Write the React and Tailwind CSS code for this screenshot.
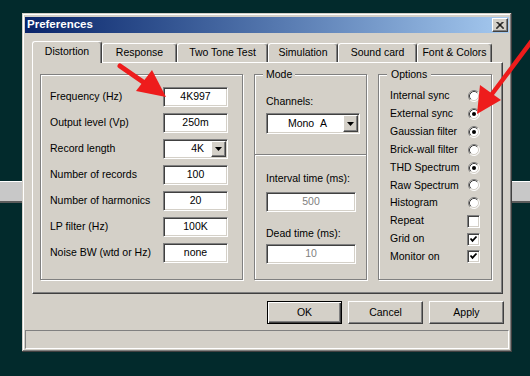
import React from 'react'

const raised =
  'border border-t-white border-l-white border-r-[#404040] border-b-[#404040] shadow-[inset_-1px_-1px_#808080]'
const sunken =
  'border border-t-[#808080] border-l-[#808080] border-r-white border-b-white shadow-[inset_1px_1px_#404040,inset_-1px_-1px_#d4d0c8]'

function Field({ value, disabled, className = '' }) {
  return (
    <div
      className={`${sunken} bg-white h-[20px] flex items-center justify-center ${
        disabled ? 'text-[#808080]' : 'text-black'
      } ${className}`}
    >
      {value}
    </div>
  )
}

function Combo({ value, className = '', textClass = '' }) {
  return (
    <div className={`${sunken} bg-white flex items-stretch p-[1px] ${className}`}>
      <div className={`flex-1 flex items-center ${textClass}`}>{value}</div>
      <div className={`w-[15px] ${raised} bg-[#d4d0c8] flex items-center justify-center`}>
        <svg width="7" height="4" viewBox="0 0 7 4">
          <polygon points="0,0 7,0 3.5,4" fill="black" />
        </svg>
      </div>
    </div>
  )
}

function Radio({ on }) {
  return (
    <svg width="12" height="12" viewBox="0 0 12 12">
      <circle cx="6" cy="6" r="5" fill="white" />
      <path d="M2.11 9.89 A5.5 5.5 0 0 1 9.89 2.11" stroke="#808080" fill="none" />
      <path d="M9.89 2.11 A5.5 5.5 0 0 1 2.11 9.89" stroke="white" fill="none" />
      <path d="M2.82 9.18 A4.5 4.5 0 0 1 9.18 2.82" stroke="#404040" fill="none" />
      <path d="M9.18 2.82 A4.5 4.5 0 0 1 2.82 9.18" stroke="#d4d0c8" fill="none" />
      {on && <circle cx="6" cy="6" r="2" fill="black" />}
    </svg>
  )
}

function Check({ on }) {
  return (
    <div className={`${sunken} bg-white w-[13px] h-[13px] flex items-center justify-center`}>
      {on && (
        <svg width="9" height="9" viewBox="0 0 9 9">
          <polyline points="1.5,3.5 3.5,5.8 7.5,1.5" stroke="black" strokeWidth="1.8" fill="none" />
        </svg>
      )}
    </div>
  )
}

function BgBar() {
  return <div className="h-[22px] bg-[#c8c8c8] border-t border-t-white border-b-2 border-b-[#5c5c5c]" />
}

const tabs = [
  ['Response', 'w-[75px]'],
  ['Two Tone Test', 'w-[91px]'],
  ['Simulation', 'w-[70px]'],
  ['Sound card', 'w-[79px]'],
  ['Font & Colors', 'w-[75px]'],
]

const leftRows = [
  ['Frequency (Hz)', '4K997'],
  ['Output level (Vp)', '250m'],
  ['Record length', null],
  ['Number of records', '100'],
  ['Number of harmonics', '20'],
  ['LP filter (Hz)', '100K'],
  ['Noise BW (wtd or Hz)', 'none'],
]

const options = [
  ['Internal sync', 'radio', false],
  ['External sync', 'radio', true],
  ['Gaussian filter', 'radio', true],
  ['Brick-wall filter', 'radio', false],
  ['THD Spectrum', 'radio', true],
  ['Raw Spectrum', 'radio', false],
  ['Histogram', 'radio', false],
  ['Repeat', 'check', false],
  ['Grid on', 'check', true],
  ['Monitor on', 'check', true],
]

function Window() {
  return (
    <div className="h-[339px] bg-[#d4d0c8] flex flex-col pt-[4px] px-[3px] pb-[3px] shadow-[inset_-1px_-1px_#404040,inset_1px_1px_#d4d0c8,inset_-2px_-2px_#808080,inset_2px_2px_white]">
      {/* Title bar */}
      <div className="h-[16px] flex items-center justify-between pl-[2px] pr-[1px] bg-linear-to-r from-[#0a246a] to-[#a6caf0]">
        <span className="text-white font-bold text-[11.5px] leading-none">Preferences</span>
        <div className={`w-[16px] h-[14px] ${raised} bg-[#d4d0c8] flex items-center justify-center`}>
          <svg width="8" height="7" viewBox="0 0 8 7">
            <path d="M0.5 0 L7.5 7 M1.5 0 L8 6.5 M7.5 0 L0.5 7 M6.5 0 L0 6.5" stroke="black" strokeWidth="1" />
          </svg>
        </div>
      </div>

      {/* Tabs */}
      <div className="ml-[7px] mr-[6px] mt-[8px]">
        <div className="relative z-10 flex items-end h-[21px]">
          <div className="w-[70px] h-[22px] -mb-[1px] bg-[#d4d0c8] border-l border-t border-r border-l-white border-t-white border-r-[#404040] shadow-[inset_-1px_0_#808080] rounded-t-[3px] flex items-center justify-center pb-[2px]">
            Distortion
          </div>
          {tabs.map(([label, w]) => (
            <div
              key={label}
              className={`${w} h-[19px] border-l border-t border-r border-l-white border-t-white border-r-[#404040] shadow-[inset_-1px_0_#808080] rounded-t-[3px] flex items-center justify-center`}
            >
              {label}
            </div>
          ))}
        </div>

        <div className="h-[232px] border border-t-white border-l-white border-r-[#404040] border-b-[#404040] shadow-[inset_-1px_-1px_#808080] pt-[5px] pl-[7px] flex items-start gap-[11px]">
          {/* Distortion group */}
          <div className="mt-[6px] w-[203px] h-[206px] border border-[#808080] shadow-[inset_1px_1px_white,1px_1px_white] pt-[12px] pl-[9px] pr-[14px] flex flex-col gap-[6px]">
            {leftRows.map(([label, value]) => (
              <div key={label} className="h-[20px] flex items-center justify-between">
                <span>{label}</span>
                {value ? (
                  <Field value={value} className="w-[65px]" />
                ) : (
                  <Combo value="4K" className="w-[65px] h-[20px]" textClass="justify-end pr-[7px]" />
                )}
              </div>
            ))}
          </div>

          {/* Mode group */}
          <fieldset className="w-[113px] h-[212px] border border-[#808080] shadow-[inset_1px_1px_white,1px_1px_white] pl-[8px] pr-[6px] min-w-0">
            <legend className="px-[3px] leading-[12px] bg-[#d4d0c8]">Mode</legend>
            <div className="pl-[3px] pt-[15px] flex flex-col">
              <span className="leading-[12px]">Channels:</span>
              <Combo value={'Mono\u00a0\u00a0A'} className="mt-[6px] w-[94px] h-[21px]" textClass="justify-center pl-[4px]" />
              <div className="-ml-[11px] -mr-[6px] mt-[20px] h-[2px] border-t border-t-[#808080] border-b border-b-white" />
              <span className="mt-[16px] leading-[12px]">Interval time (ms):</span>
              <Field value="500" disabled className="mt-[8px] w-[90px] h-[19px]" />
              <span className="mt-[15px] leading-[12px]">Dead time (ms):</span>
              <Field value="10" disabled className="mt-[5px] w-[90px] h-[19px]" />
            </div>
          </fieldset>

          {/* Options group */}
          <fieldset className="w-[114px] h-[212px] border border-[#808080] shadow-[inset_1px_1px_white,1px_1px_white] pl-[8px] pr-[11px] min-w-0">
            <legend className="px-[4px] leading-[12px] bg-[#d4d0c8]">Options</legend>
            <div className="pl-[3px] pt-[7px] flex flex-col">
              {options.map(([label, kind, on]) => (
                <div key={label} className="h-[17.9px] flex items-center justify-between">
                  <span>{label}</span>
                  <div className="w-[13px] flex justify-center">
                    {kind === 'radio' ? <Radio on={on} /> : <Check on={on} />}
                  </div>
                </div>
              ))}
            </div>
          </fieldset>
        </div>
      </div>

      {/* Buttons */}
      <div className="mt-[7px] mr-[5px] flex justify-end gap-[6px]">
        <div className="w-[75px] h-[23px] border border-black">
          <div className="h-full flex items-center justify-center shadow-[inset_1px_1px_white,inset_-1px_-1px_#404040,inset_-2px_-2px_#808080]">
            OK
          </div>
        </div>
        <div className={`w-[75px] h-[23px] ${raised} flex items-center justify-center`}>Cancel</div>
        <div className={`w-[75px] h-[23px] ${raised} flex items-center justify-center`}>Apply</div>
      </div>

      {/* Status bar */}
      <div className="mt-auto h-[19px] border border-t-[#808080] border-l-[#808080] border-r-white border-b-white" />
    </div>
  )
}

export default function App() {
  return (
    <div className="relative w-[530px] h-[376px] overflow-hidden bg-[#022a2c] flex font-['Liberation_Sans',Arial,sans-serif] text-[10.5px] text-black">
      <div className="w-[22px] pt-[181px]">
        <BgBar />
      </div>
      <div className="w-[490px] pt-[13px]">
        <Window />
      </div>
      <div className="flex-1 pt-[181px]">
        <BgBar />
      </div>

      {/* Red annotation arrows */}
      <svg className="absolute inset-0 pointer-events-none" width="530" height="376" viewBox="0 0 530 376">
        <line x1="120" y1="66" x2="146" y2="84" stroke="#ee1c1c" strokeWidth="5" strokeLinecap="round" />
        <polygon points="166,97 136,91 152,70" fill="#ee1c1c" />
        <line x1="540" y1="30" x2="492" y2="94" stroke="#ee1c1c" strokeWidth="4.5" strokeLinecap="round" />
        <polygon points="477,114 480,85 501,100" fill="#ee1c1c" />
      </svg>
    </div>
  )
}
